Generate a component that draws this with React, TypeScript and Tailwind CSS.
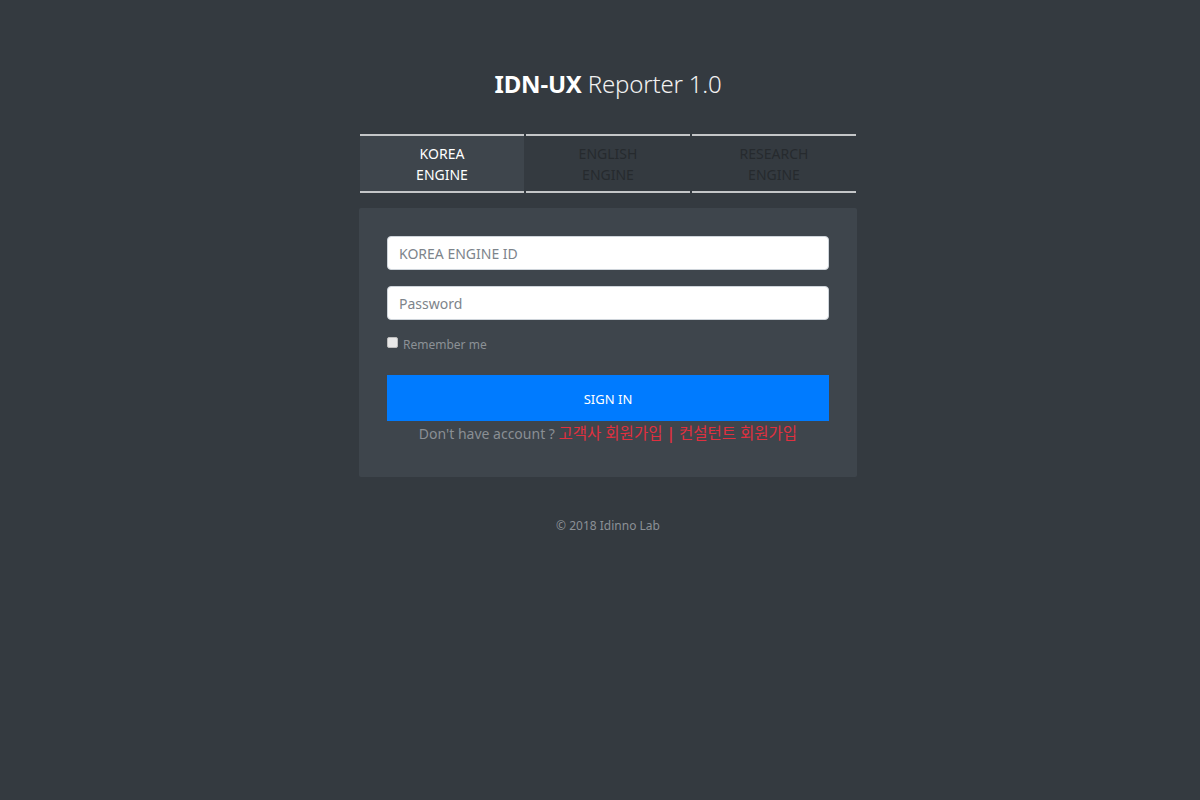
import React from "react";

const tabs = [
  { label: ["KOREA", "ENGINE"], active: true },
  { label: ["ENGLISH", "ENGINE"], active: false },
  { label: ["RESEARCH", "ENGINE"], active: false },
];

export default function App() {
  return (
    <div
      className="min-h-[800px] w-full bg-[#343a40] flex flex-col items-center pl-[16px]"
      style={{ fontFamily: '"Noto Sans", "Noto Sans CJK KR", sans-serif' }}
    >
      {/* Title */}
      <h1 className="mt-[64px] text-[24px] leading-[40px] text-white tracking-[-0.2px]">
        <span className="font-bold">IDN-UX</span>{" "}
        <span className="font-light text-[#f1f1f1]">Reporter 1.0</span>
      </h1>

      {/* Engine tabs */}
      <div className="mt-[30px] w-[496px] flex gap-[2px]">
        {tabs.map((t) => (
          <div
            key={t.label[0]}
            className={
              "flex-1 h-[59px] border-t-2 border-b-2 border-[#c4c6c8] flex flex-col items-center justify-center text-[14px] leading-[21px] " +
              (t.active ? "bg-[#3e454c] text-white" : "bg-[#343a40] text-[#262a2e]")
            }
          >
            <span>{t.label[0]}</span>
            <span>{t.label[1]}</span>
          </div>
        ))}
      </div>

      {/* Login card */}
      <div className="mt-[15px] w-[498px] bg-[#3e454c] rounded-[2px] px-[28px] pt-[28px] pb-[32px]">
        <input
          placeholder="KOREA ENGINE ID"
          className="w-full h-[34px] rounded-[4px] bg-white border border-[#ced4da] px-[11px] text-[14px] text-[#495057] placeholder:text-[#7d848b] outline-none"
        />
        <input
          type="password"
          placeholder="Password"
          className="mt-[16px] w-full h-[34px] rounded-[4px] bg-white border border-[#ced4da] px-[11px] text-[14px] text-[#495057] placeholder:text-[#7d848b] outline-none"
        />
        <label className="mt-[12px] h-[20px] flex items-start gap-[5px] text-[12px] text-[#8c9196]">
          <span className="mt-[5px] w-[11px] h-[11px] rounded-[2px] bg-[#e8e8e8] border border-[#bdbdbd]" />
          <span className="mt-[4px] leading-[18px]">Remember me</span>
        </label>
        <button
          type="button"
          className="mt-[23px] w-full h-[46px] pt-[3px] bg-[#007bff] text-white text-[13px]"
        >
          SIGN IN
        </button>
        <p className="mt-[1px] text-center text-[14px] leading-[22px] text-[#8a8f94]">
          Don't have account ?{" "}
          <span className="text-[15.5px] text-[#e0303f]">
            고객사 회원가입 <span className="font-semibold">|</span> 컨설턴트 회원가입
          </span>
        </p>
      </div>

      {/* Footer */}
      <p className="mt-[40px] text-[12px] text-[#8b9096]">© 2018 Idinno Lab</p>
    </div>
  );
}
